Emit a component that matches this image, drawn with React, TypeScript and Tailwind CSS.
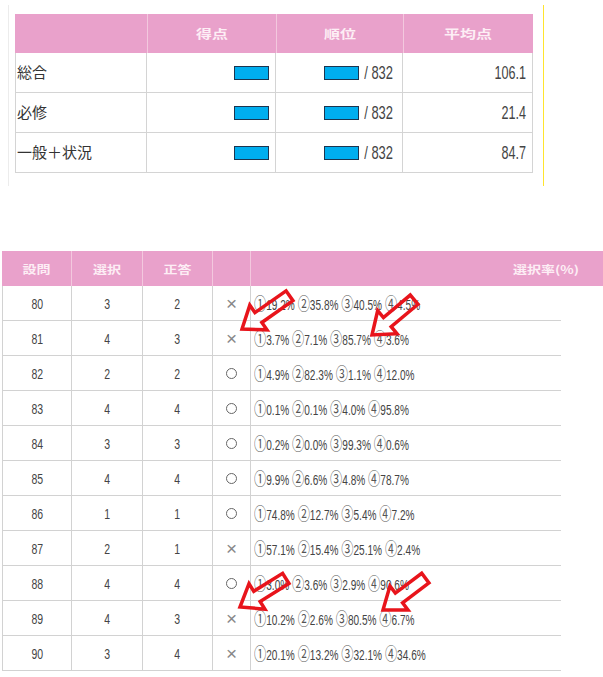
import React from "react";

const rows: [string, string, string, string, string][] = [
  ["80", "3", "2", "×", "①19.2% ②35.8% ③40.5% ④4.5%"],
  ["81", "4", "3", "×", "①3.7% ②7.1% ③85.7% ④3.6%"],
  ["82", "2", "2", "○", "①4.9% ②82.3% ③1.1% ④12.0%"],
  ["83", "4", "4", "○", "①0.1% ②0.1% ③4.0% ④95.8%"],
  ["84", "3", "3", "○", "①0.2% ②0.0% ③99.3% ④0.6%"],
  ["85", "4", "4", "○", "①9.9% ②6.6% ③4.8% ④78.7%"],
  ["86", "1", "1", "○", "①74.8% ②12.7% ③5.4% ④7.2%"],
  ["87", "2", "1", "×", "①57.1% ②15.4% ③25.1% ④2.4%"],
  ["88", "4", "4", "○", "①3.0% ②3.6% ③2.9% ④90.6%"],
  ["89", "4", "3", "×", "①10.2% ②2.6% ③80.5% ④6.7%"],
  ["90", "3", "4", "×", "①20.1% ②13.2% ③32.1% ④34.6%"],
];

const top: [string, string][] = [
  ["総合", "106.1"],
  ["必修", "21.4"],
  ["一般＋状況", "84.7"],
];

function Box() {
  return <span className="inline-block w-[35px] h-[14px] bg-[#00aeef] border border-[#1b3550]" />;
}

function Pct({ text }: { text: string }) {
  const parts = text.split(/([①②③④])/).filter((p) => p.length > 0);
  return (
    <span className="inline-block leading-none whitespace-nowrap scale-x-[0.72] origin-left">
      {parts.map((p, i) =>
        /[①②③④]/.test(p) ? (
          <span key={i} className="text-[17px] font-['Noto_Sans_CJK_JP',sans-serif] text-[#555]">
            {p}
          </span>
        ) : (
          <span key={i} className="text-[14px]">
            {p}
          </span>
        )
      )}
    </span>
  );
}

function Arrow({ x, y, a, L }: { x: number; y: number; a: number; L: number }) {
  const w = 6;
  const h = 15;
  const hl = 20;
  const pts = `${-L},${-w} ${-hl},${-w} ${-hl},${-h} 0,0 ${-hl},${h} ${-hl},${w} ${-L},${w}`;
  return (
    <polygon
      points={pts}
      transform={`translate(${x} ${y}) rotate(${a})`}
      fill="none"
      stroke="#e8141b"
      strokeWidth={3.5}
      strokeLinejoin="miter"
    />
  );
}

export default function App() {
  return (
    <div className="relative w-[603px] h-[677px] bg-white overflow-hidden font-['Liberation_Sans','Noto_Sans_CJK_JP',sans-serif] text-[#333]">
      {/* top summary */}
      <div className="ml-[8px] mt-[5px] w-[536px] h-[181px] border-l border-l-[#ececec] border-r border-r-[#ffe42e] pl-[6px] pt-[9px]">
        <div className="w-[518px]">
          <div className="flex h-[39px] bg-[#e9a1cb] border-x border-[#e9a1cb] text-[#fdeef5] font-bold text-[16px] font-['Noto_Sans_CJK_JP',sans-serif]">
            <div className="w-[132px] border-r border-[#f3c8de]" />
            <div className="w-[129px] border-r border-[#f3c8de] flex items-center justify-center">
              <span className="inline-block scale-y-[0.75] leading-none">得点</span>
            </div>
            <div className="w-[127px] border-r border-[#f3c8de] flex items-center justify-center">
              <span className="inline-block scale-y-[0.75] leading-none">順位</span>
            </div>
            <div className="flex-1 flex items-center justify-center">
              <span className="inline-block scale-y-[0.75] leading-none">平均点</span>
            </div>
          </div>
          {top.map(([label, avg]) => (
            <div key={label} className="flex h-[40px] border-x border-b border-[#d4d4d4]">
              <div className="w-[131px] border-r border-[#d4d4d4] flex items-center pl-[1px] text-[15px] font-['Noto_Sans_CJK_JP',sans-serif] text-[#333]">
                {label}
              </div>
              <div className="w-[129px] border-r border-[#d4d4d4] flex items-center justify-end pr-[6px]">
                <Box />
              </div>
              <div className="w-[127px] border-r border-[#d4d4d4] flex items-center justify-end pr-[9px]">
                <Box />
                <span className="inline-block -ml-[6px] text-[18px] leading-none scale-x-[0.72] origin-right text-[#444]">/ 832</span>
              </div>
              <div className="flex-1 flex items-center justify-end pr-[6px]">
                <span className="inline-block text-[18px] leading-none scale-x-[0.7] origin-right text-[#444]">{avg}</span>
              </div>
            </div>
          ))}
        </div>
      </div>

      {/* question table */}
      <div className="ml-[2px] mt-[65px] w-[601px]">
        <div className="flex h-[35px] bg-[#e9a1cb] text-[#fdeef5] font-bold text-[14px] font-['Noto_Sans_CJK_JP',sans-serif]">
          <div className="w-[70px] border-r border-[#f3c8de] flex items-center justify-center">
            <span className="inline-block scale-y-[0.8] leading-none">設問</span>
          </div>
          <div className="w-[71px] border-r border-[#f3c8de] flex items-center justify-center">
            <span className="inline-block scale-y-[0.8] leading-none">選択</span>
          </div>
          <div className="w-[70px] border-r border-[#f3c8de] flex items-center justify-center">
            <span className="inline-block scale-y-[0.8] leading-none">正答</span>
          </div>
          <div className="w-[38px] border-r border-[#f3c8de]" />
          <div className="flex-1 flex items-center justify-end pr-[24px]">
            <span className="inline-block scale-y-[0.8] leading-none">選択率(%)</span>
          </div>
        </div>
        {rows.map(([q, sel, ans, mark, pct]) => (
          <div key={q} className="flex h-[35px] w-[559px] border-b border-[#d2d2d2] text-[#444]">
            <div className="w-[70px] border-x border-[#d2d2d2] flex items-center justify-center">
              <span className="inline-block text-[15px] leading-none scale-x-[0.7]">{q}</span>
            </div>
            <div className="w-[71px] border-r border-[#d2d2d2] flex items-center justify-center">
              <span className="inline-block text-[15px] leading-none scale-x-[0.7]">{sel}</span>
            </div>
            <div className="w-[70px] border-r border-[#d2d2d2] flex items-center justify-center">
              <span className="inline-block text-[15px] leading-none scale-x-[0.7]">{ans}</span>
            </div>
            <div className="w-[38px] border-r border-[#d2d2d2] flex items-center justify-center text-[#888]">
              {mark === "×" ? (
                <span className="text-[19px] leading-none font-light">×</span>
              ) : (
                <span className="inline-block w-[11px] h-[11px] rounded-full border-[1.5px] border-[#666]" />
              )}
            </div>
            <div className="flex-1 flex items-center pl-[3px]">
              <Pct text={pct} />
            </div>
          </div>
        ))}
      </div>

      <svg className="absolute left-0 top-0 pointer-events-none" width={603} height={677} viewBox="0 0 603 677">
        <Arrow x={242} y={329} a={145} L={58} />
        <Arrow x={372} y={335} a={140} L={55} />
        <Arrow x={240} y={607} a={148} L={54} />
        <Arrow x={383} y={610} a={143} L={53} />
      </svg>
    </div>
  );
}
